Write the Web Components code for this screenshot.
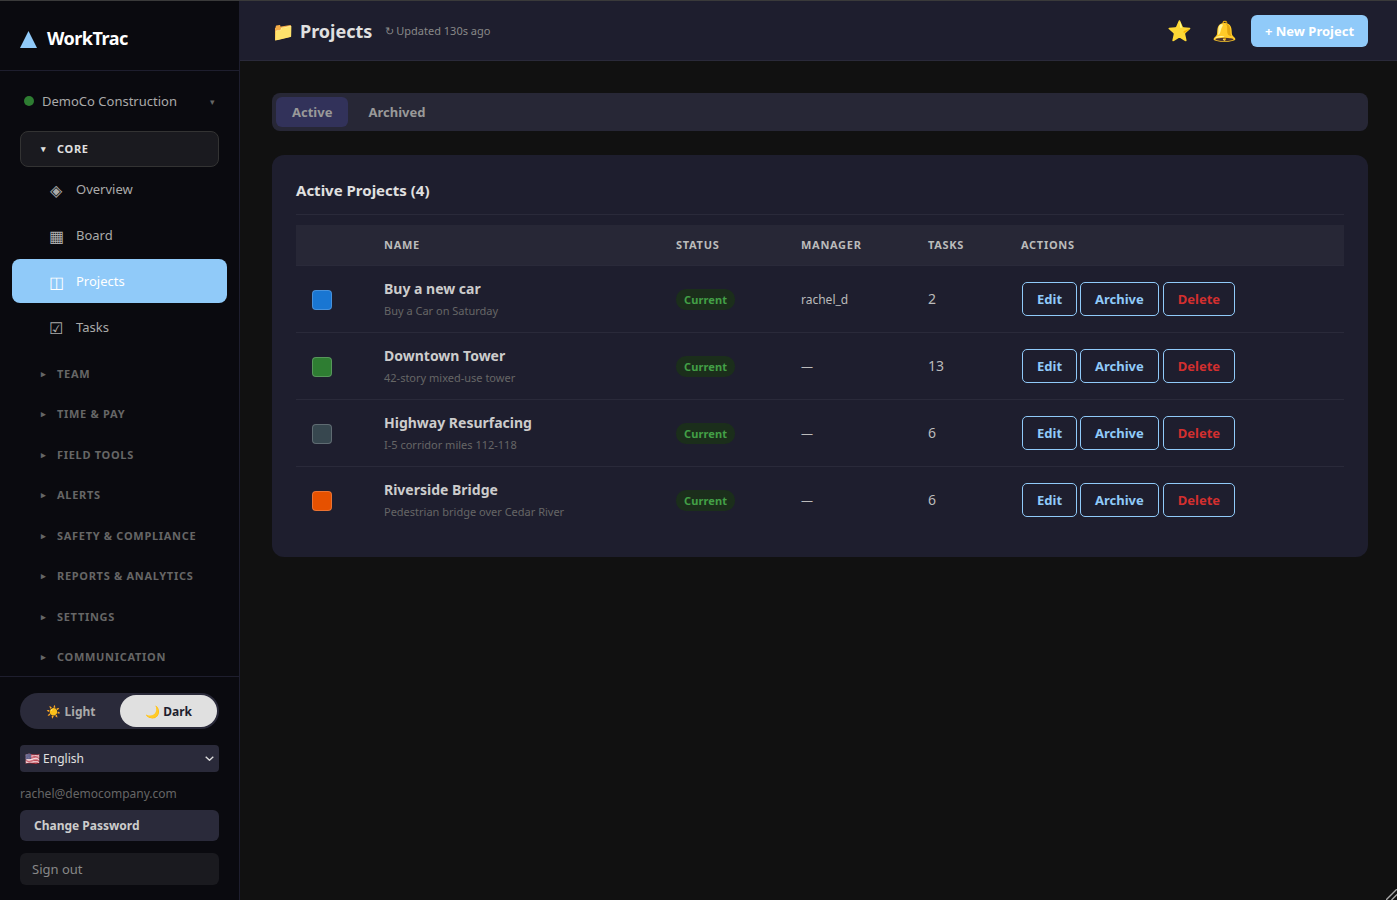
<!DOCTYPE html>
<html lang="en"><head><meta charset="utf-8"><title>WorkTrac</title>
<style>
html,body{margin:0;height:100%;background:#111;font-family:"Noto Sans",sans-serif;overflow:hidden}
</style></head><body>
<wt-app>
<wt-sidebar slot="side"></wt-sidebar>
<wt-topbar slot="top"></wt-topbar>
<wt-tabs slot="main"></wt-tabs>
<wt-card slot="main" heading="Active Projects (4)">
  <wt-row head></wt-row>
  <wt-row color="#1976d2" name="Buy a new car" desc="Buy a Car on Saturday" manager="rachel_d" tasks="2"></wt-row>
  <wt-row color="#2e7d32" name="Downtown Tower" desc="42-story mixed-use tower" manager="—" tasks="13"></wt-row>
  <wt-row color="#37474f" name="Highway Resurfacing" desc="I-5 corridor miles 112-118" manager="—" tasks="6"></wt-row>
  <wt-row last color="#e65100" name="Riverside Bridge" desc="Pedestrian bridge over Cedar River" manager="—" tasks="6"></wt-row>
</wt-card>
</wt-app>
<script>
const el=(name,html)=>customElements.define(name,class extends HTMLElement{
  connectedCallback(){ if(!this.shadowRoot) this.attachShadow({mode:'open'}).innerHTML=typeof html==='function'?html(this):html; }
});
el('wt-app',`<style>
:host{display:flex;flex-direction:column;height:100vh;box-sizing:border-box;border-top:1px solid #3a3a3a;position:relative}
.wrap{display:flex;flex:1;min-height:0}
.side{display:block;width:240px;flex:none}
.col{flex:1;min-width:0;display:flex;flex-direction:column}
.main{display:flex;flex-direction:column;gap:24px;padding:32px 29px 0 32px}
.grip{position:absolute;right:0;bottom:0}
</style><div class="wrap"><div class="side"><slot name="side"></slot></div><div class="col"><slot name="top"></slot><div class="main"><slot name="main"></slot></div></div></div>
<svg class="grip" width="11" height="11" viewBox="0 0 11 11"><path d="M0 11 11 0M5.500 11 11 5.500" stroke="#a8a8a8" stroke-width="1.400" fill="none"/></svg>`);

el('wt-sidebar',`<style>
:host{display:flex;flex-direction:column;height:899px;box-sizing:border-box;width:240px;background:#0a0a0f;border-right:1px solid #1e1e2e;color:#aaa}
.brand{height:70px;flex:none;box-sizing:border-box;border-bottom:1px solid #1e1e2e;display:flex;align-items:center;gap:10px;padding:4px 0 0 20px;color:#fff;font-size:18px;font-weight:700;letter-spacing:-.5px}
.brand svg{margin-top:4px}
.org{display:flex;align-items:center;height:60px;flex:none;box-sizing:border-box;padding:0 24px 0 24px;font-size:13px;color:#aaa}
.dot{width:10px;height:10px;border-radius:50%;background:#2e7d32;margin-right:8px}
.org span{flex:1}.org i{font-style:normal;font-size:9px;color:#666}
nav{flex:1;min-height:0;display:flex;flex-direction:column}
.gap{height:1.750px;flex:none}
.foot{border-top:1px solid #1e1e2e;padding:16px 20px 15px;display:flex;flex-direction:column}
.toggle{display:flex;height:36px;background:#2a2a3a;border-radius:18px;padding:2px;box-sizing:border-box;font-size:12px;font-weight:700;color:#aaa}
.toggle div{flex:1;border-radius:16px;display:flex;align-items:center;justify-content:center}
.toggle .on{background:#e0e0e0;color:#1e1e2e;flex:none;width:97px}
.lang{position:relative;margin-top:16px;height:27px}
select{appearance:none;display:block;height:27px;background:#2a2a3a;color:#e0e0e0;border:0;border-radius:4px;font:12px "Noto Sans",sans-serif;padding:0 0 0 5px;width:199px}
.lang svg{position:absolute;right:5px;top:11px;pointer-events:none}
.mail{font-size:12px;color:#666;margin-top:14px;line-height:16px}
.btn{height:31px;margin-top:8px;background:#2a2a3a;border-radius:6px;display:flex;align-items:center;padding-left:14px;font-size:12px;font-weight:700;color:#ccc}
.out{height:32px;margin-top:12px;background:#1a1a1f;border-radius:6px;display:flex;align-items:center;padding-left:12px;font-size:13px;color:#888}
</style>
<div class="brand"><svg width="17" height="17" viewBox="0 0 17 17"><path d="M8.500 0 17 17H0z" fill="#90caf9"/></svg><span>WorkTrac</span></div>
<div class="org"><div class="dot"></div><span>DemoCo Construction</span><i>▾</i></div>
<nav>
<wt-section open label="CORE"></wt-section>
<wt-link icon="◈" label="Overview"></wt-link>
<wt-link icon="▦" label="Board"></wt-link>
<wt-link icon="◫" label="Projects" active></wt-link>
<wt-link icon="☑" label="Tasks"></wt-link>
<div class="gap"></div>
<wt-section label="TEAM"></wt-section>
<wt-section label="TIME &amp; PAY"></wt-section>
<wt-section label="FIELD TOOLS"></wt-section>
<wt-section label="ALERTS"></wt-section>
<wt-section label="SAFETY &amp; COMPLIANCE"></wt-section>
<wt-section label="REPORTS &amp; ANALYTICS"></wt-section>
<wt-section label="SETTINGS"></wt-section>
<wt-section label="COMMUNICATION"></wt-section>
</nav>
<div class="foot">
<div class="toggle"><div>☀️ Light</div><div class="on">🌙 Dark</div></div>
<div class="lang"><select><option>🇺🇸 English</option></select><svg width="9" height="5" viewBox="0 0 9 5"><path d="M.7.7 4.500 4.300 8.300.7" stroke="#e0e0e0" stroke-width="1.300" fill="none"/></svg></div>
<div class="mail">rachel@democompany.com</div>
<div class="btn">Change Password</div>
<div class="out">Sign out</div>
</div>`);

el('wt-section',h=>{const o=h.hasAttribute('open');return `<style>
:host{display:block;margin:0 20px;flex:none}
div{display:flex;align-items:center;height:${o?36:40.5}px;box-sizing:border-box;padding:0 0 ${o?2:0}px ${o?20:21}px;font-size:11px;font-weight:700;letter-spacing:.7px;color:${o?'#e0e0e0':'#666'};border-radius:8px;${o?'background:#1a1a1f;border:1px solid #333;':''}}
i{font-style:normal;font-size:9px;width:16px;letter-spacing:0}
</style><div><i>${o?'▾':'▸'}</i><span>${h.getAttribute('label').replace('&','&amp;')}</span></div>`});

el('wt-link',h=>{const a=h.hasAttribute('active');return `<style>
:host{display:block;margin:0 12px 2px;flex:none}
a{display:flex;align-items:center;height:44px;box-sizing:border-box;padding-left:32px;border-radius:8px;font-size:13px;color:${a?'#fff':'#aaa'};background:${a?'#90caf9':'none'}}
i{font-style:normal;font-size:16px;width:24px;margin-right:8px;text-align:center;line-height:1;padding-top:2px}
</style><a><i>${h.getAttribute('icon')}</i><span>${h.getAttribute('label')}</span></a>`});

el('wt-topbar',`<style>
:host{display:flex;align-items:center;height:60px;box-sizing:border-box;background:#1e1e2e;border-bottom:1px solid #2a2a3a;padding:0 29px 0 32px}
.t{font-size:18px;font-weight:700;color:#e0e0e0;display:flex;gap:6px}
small{font-size:11px;color:#888;margin-left:13px;flex:1}
small span{margin-left:-1px}
.i{font-size:20px;margin-right:20px;line-height:1}
button{height:32px;width:117px;border:0;border-radius:6px;background:#90caf9;color:#fff;font:700 13px "Noto Sans",sans-serif;padding:0}
</style><div class="t"><span>📁</span><span>Projects</span></div><small>↻ <span>Updated 130s ago</span></small><span class="i">⭐</span><span class="i" style="margin-right:14px">🔔</span><button>+ New Project</button>`);

el('wt-tabs',`<style>
:host{display:flex;gap:4px;height:38px;box-sizing:border-box;background:#272736;border-radius:8px;padding:4px;font-size:13px;font-weight:700;color:#999}
div{display:flex;align-items:center;padding:0 16px;border-radius:6px}
.on{background:#32325a}
</style><div class="on">Active</div><div>Archived</div>`);

el('wt-card',h=>`<style>
:host{display:block;background:#1e1e2e;border-radius:12px;padding:24px;height:402px;box-sizing:border-box}
h2{margin:0 0 10px;padding-bottom:12px;border-bottom:1px solid #2a2a3a;font-size:15px;font-weight:700;color:#e0e0e0;line-height:23px}
</style><h2>${h.getAttribute('heading')}</h2><slot></slot>`);

el('wt-row',h=>{
 const hd=h.hasAttribute('head');
 const css=`<style>
:host{display:grid;grid-template-columns:88px 292px 125px 127px 93px 1fr;align-items:center;border-bottom:1px solid ${h.hasAttribute('last')?'transparent':'#2a2a3a'};box-sizing:border-box;height:${hd?41:67}px;${hd?'background:#272736;':''}color:#bbb;font-size:13px}
.th{font-size:11px;font-weight:700;letter-spacing:.7px;color:#bbb;padding-bottom:2px}
.sw{width:20px;height:20px;border-radius:4px;margin:2px 0 0 16px;box-sizing:border-box;border:1px solid rgba(255,255,255,.2)}
b{display:block;font-size:14px;font-weight:700;color:#ccc;line-height:20px}
small{display:block;font-size:11px;color:#666;margin-top:4px;line-height:15px}
.nm{padding-bottom:2px}
.pill{display:inline-block;font-size:11px;font-weight:700;letter-spacing:.1px;color:#43a047;background:#1b2e1b;border-radius:10px;padding:2px 8px;line-height:17px}
.mg{font-size:12px}
.tasks{font-size:14px;padding-bottom:2px}
.acts{display:flex;gap:3px;margin-left:1px}
button{height:34px;padding:0 14px;border:1px solid #90caf9;background:none;border-radius:5px;color:#90caf9;font:700 13px "Noto Sans",sans-serif}
.del{color:#d32f2f;margin-left:1px}
</style>`;
 if(hd) return css+['','NAME','STATUS','MANAGER','TASKS','ACTIONS'].map(t=>`<div class="th">${t}</div>`).join('');
 const g=a=>h.getAttribute(a);
 return css+`<div class="sw" style="background:${g('color')}"></div><div class="nm"><b>${g('name')}</b><small>${g('desc')}</small></div><div><span class="pill">Current</span></div><div class="mg">${g('manager')}</div><div class="tasks">${g('tasks')}</div><div class="acts"><button>Edit</button><button>Archive</button><button class="del">Delete</button></div>`;
});
</script>
</body></html>
